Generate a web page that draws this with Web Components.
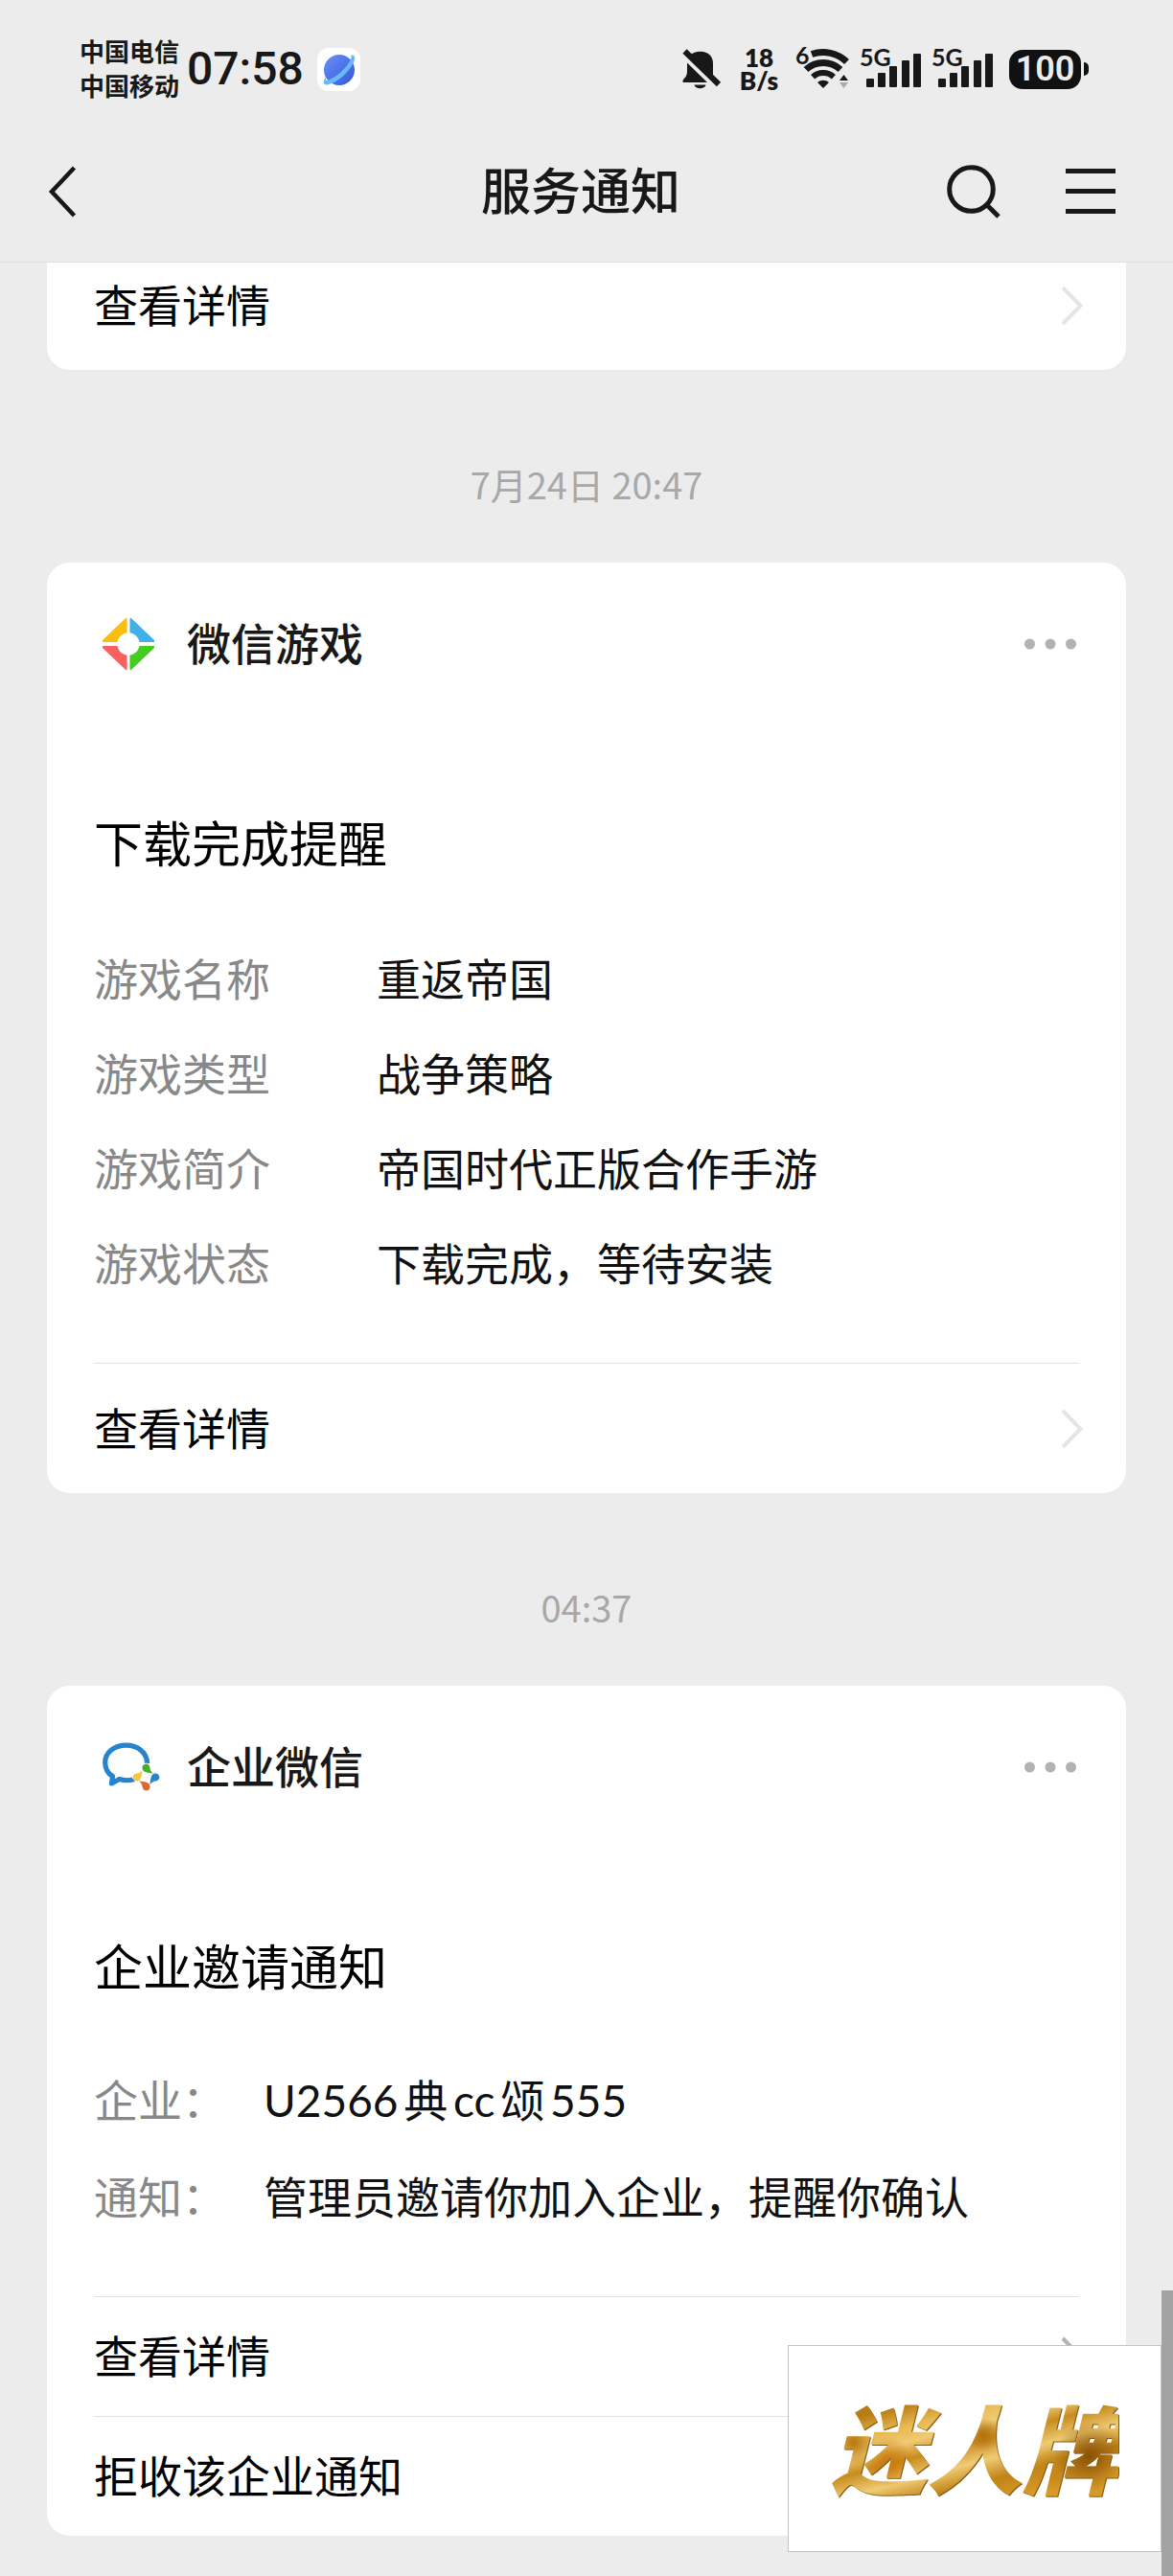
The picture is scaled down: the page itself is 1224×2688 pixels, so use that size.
<!DOCTYPE html>
<html lang="zh-CN">
<head>
<meta charset="utf-8">
<meta name="viewport" content="width=device-width, initial-scale=1">
<title>服务通知</title>
<style>
  body {
    margin: 0;
    min-height: 100vh;
    position: relative;
    background: #ececec;
    color: #000;
    font-family: "Noto Sans CJK SC", sans-serif;
    font-size: 46px;
  }

  main {
    padding: 0 49px 42px;
  }
</style>
</head>
<body>
  <status-bar time="07:58"></status-bar>
  <nav-header>服务通知</nav-header>

  <main>
    <notice-card cut>
      <card-action slot="actions" cut>查看详情</card-action>
    </notice-card>

    <time-stamp>7月24日 20:47</time-stamp>

    <notice-card source="微信游戏" heading="下载完成提醒">
      <svg slot="logo" width="72" height="72" viewBox="-9 -9 73 73" aria-hidden="true">
        <g stroke-width="2" stroke-linejoin="round">
          <path d="M25 1V24.500H1V24Z" fill="#fdbd10" stroke="#fdbd10"/>
          <path d="M30 1V24.500H54V24Z" fill="#40b1e8" stroke="#40b1e8"/>
          <path d="M30 54V30.500H54V31Z" fill="#44cc20" stroke="#44cc20"/>
          <path d="M25 54V30.500H1V31Z" fill="#f96161" stroke="#f96161"/>
        </g>
        <circle cx="27.500" cy="27.500" r="11.800" fill="#fff"/>
      </svg>
      <notice-field label="游戏名称">重返帝国</notice-field>
      <notice-field label="游戏类型">战争策略</notice-field>
      <notice-field label="游戏简介">帝国时代正版合作手游</notice-field>
      <notice-field label="游戏状态">下载完成，等待安装</notice-field>
      <card-action slot="actions" single>查看详情</card-action>
    </notice-card>

    <time-stamp>04:37</time-stamp>

    <notice-card source="企业微信" heading="企业邀请通知" narrow>
      <svg slot="logo" width="72" height="72" viewBox="0 0 72 72" aria-hidden="true">
        <defs>
          <path id="drop" d="M50.500 37.500A4 4 0 1 1 58.400 36.500C58.600 39 60 41 62 42.500C57 42 51 41.500 50.500 37.500Z"/>
        </defs>
        <path d="M55.500 32C55.500 21 46 13.200 33.500 13.200C21 13.200 11.700 21 11.700 31C11.700 38 14.500 42.500 19.500 45.500L18.500 53L26.500 48.500C31 50 37 50 42 48.800" fill="none" stroke="#2484cf" stroke-width="5.200" stroke-linejoin="round"/>
        <path d="M54.500 32.500L68.500 46.500L54.500 60.500L40.500 46.500Z" fill="#fff" stroke="#fff" stroke-width="2" stroke-linejoin="round"/>
        <use href="#drop" fill="#43b02a"/>
        <use href="#drop" fill="#2484cf" transform="rotate(90 54.500 46.500)"/>
        <use href="#drop" fill="#e2662c" transform="rotate(180 54.500 46.500)"/>
        <use href="#drop" fill="#f2c83c" transform="rotate(270 54.500 46.500)"/>
      </svg>
      <notice-field label="企业：" latin>U2566典cc颂555</notice-field>
      <notice-field label="通知：">管理员邀请你加入企业，提醒你确认</notice-field>
      <card-action slot="actions" strong>查看详情</card-action>
      <card-action slot="actions" strong>拒收该企业通知</card-action>
    </notice-card>
  </main>

  <corner-mark>迷人牌</corner-mark>

<script>
class StatusBar extends HTMLElement {
  constructor() {
    super();
    this.attachShadow({ mode: 'open' });
  }

  connectedCallback() {
    this.render();
  }

  signal() {
    return `
      <svg width="64" height="46" viewBox="0 0 64 46" role="img" aria-label="5G">
        <text x="-1" y="20" font-size="25">5G</text>
        <rect x="6" y="33" width="8" height="9" rx="1"/>
        <rect x="18" y="27" width="8" height="15" rx="1"/>
        <rect x="30" y="20" width="8" height="22" rx="1"/>
        <rect x="43" y="14" width="8" height="28" rx="1"/>
        <rect x="55" y="7" width="8" height="35" rx="1"/>
      </svg>
    `;
  }

  render() {
    const style = `
      :host {
        display: flex;
        align-items: center;
        justify-content: space-between;
        height: 144px;
        padding: 0 88px 0 83px;
        box-sizing: border-box;
        color: #181818;
      }

      .left, .right {
        display: flex;
        align-items: center;
      }

      .carriers {
        font-size: 26px;
        font-weight: 700;
        line-height: 36px;
        margin-right: 8px;
        padding-bottom: 2px;
      }

      .time {
        font-family: Roboto, sans-serif;
        font-size: 48px;
        font-weight: 500;
        line-height: 56px;
        margin-right: 14px;
      }

      .right {
        gap: 11px;
      }

      .speed {
        width: 44px;
        margin: 0 6px;
        font-family: Lato, sans-serif;
        font-size: 26px;
        font-weight: 800;
        line-height: 24px;
        text-align: center;
      }

      .battery {
        display: flex;
        align-items: center;
        gap: 3px;
        margin-left: 5px;
      }

      .level {
        width: 75px;
        border-radius: 14px;
        background: #111;
        color: #ececec;
        font-family: Roboto, sans-serif;
        font-size: 36px;
        font-weight: 600;
        line-height: 41px;
        text-align: center;
      }

      .tip {
        width: 5px;
        height: 14px;
        border-radius: 0 5px 5px 0;
        background: #111;
      }

      svg {
        display: block;
        fill: #181818;
        overflow: visible;
        font-family: Lato, sans-serif;
        font-weight: 700;
      }
    `;

    this.shadowRoot.innerHTML = `
      <style>${style}</style>
      <div class="left">
        <div class="carriers">
          <div>中国电信</div>
          <div>中国移动</div>
        </div>
        <div class="time">${this.getAttribute('time')}</div>
        <svg width="45" height="45" viewBox="0 0 45 45" aria-hidden="true">
          <defs>
            <linearGradient id="planet" x1="0" y1="0" x2="1" y2="1">
              <stop offset="0" stop-color="#6a8ff8"/>
              <stop offset="1" stop-color="#3458d8"/>
            </linearGradient>
          </defs>
          <rect width="45" height="45" rx="12" fill="#fff"/>
          <circle cx="23" cy="23" r="16" fill="url(#planet)"/>
          <path d="M34 8C38 6 41 9 38 15C34 24 22 36 12 38C7 40 5 36 9 30C8 34 10 35 13 33C22 29 31 20 35 12C36 9 36 8 34 8Z" fill="#68b8fa"/>
        </svg>
      </div>
      <div class="right">
        <svg width="41" height="42" viewBox="0 0 41 42" role="img" aria-label="静音">
          <path d="M8.500 6C11 4 14 2.700 19 2.700C27 2.700 32 8 32 15V28Z"/>
          <path d="M5 14.500L26 35H2C0 35 0 33 1.500 31.500C4 29 5 27 5 23Z"/>
          <path d="M12.500 37.500H24.500C23.500 42.500 13.500 42.500 12.500 37.500Z"/>
          <path d="M2.500 2.500L38 37" stroke="#181818" stroke-width="6"/>
        </svg>
        <div class="speed">18<br>B/s</div>
        <svg width="56" height="46" viewBox="0 0 56 46" role="img" aria-label="Wi-Fi 6">
          <text x="-1" y="18" font-size="25">6</text>
          <g fill="none" stroke="#181818">
            <path d="M16 7.500A36 36 0 0 1 52.500 15.500" stroke-width="7"/>
            <path d="M10 23.500A26.500 26.500 0 0 1 46 23.500" stroke-width="7"/>
            <path d="M17.100 31.300A16 16 0 0 1 38.900 31.300" stroke-width="6"/>
          </g>
          <path d="M28 43L22 37A9 9 0 0 1 34 37Z"/>
          <path d="M45 35L49.500 29L54 35Z"/>
          <path d="M45 37L49.500 43L54 37Z" fill="#aaa"/>
        </svg>
        ${this.signal()}
        ${this.signal()}
        <div class="battery">
          <div class="level">100</div>
          <div class="tip"></div>
        </div>
      </div>
    `;
  }
}

class NavHeader extends HTMLElement {
  constructor() {
    super();
    this.attachShadow({ mode: 'open' });
  }

  connectedCallback() {
    this.render();
  }

  render() {
    const style = `
      :host {
        display: grid;
        grid-template-columns: 1fr auto 1fr;
        align-items: center;
        height: 130px;
        padding: 0 60px 18px 48px;
        border-bottom: 1px solid #e0e0e0;
        box-sizing: border-box;
        color: #181818;
      }

      h1 {
        margin: 0;
        font-size: 52px;
        font-weight: 500;
        line-height: 72px;
        padding-bottom: 6px;
      }

      button {
        display: block;
        padding: 0;
        border: 0;
        background: none;
        color: inherit;
      }

      .tools {
        display: flex;
        align-items: center;
        justify-content: flex-end;
        gap: 68px;
      }

      svg {
        display: block;
        fill: none;
        stroke: currentColor;
        stroke-width: 5;
      }
    `;

    this.shadowRoot.innerHTML = `
      <style>${style}</style>
      <nav>
        <button type="button" aria-label="返回">
          <svg width="36" height="56" viewBox="0 0 36 56"><path d="M29.500 3L6 28L29.500 53" stroke-width="4.500"/></svg>
        </button>
      </nav>
      <h1><slot></slot></h1>
      <div class="tools">
        <button type="button" aria-label="搜索">
          <svg width="56" height="56" viewBox="0 0 56 56"><circle cx="25.500" cy="25.500" r="22.800"/><path d="M41.500 41.500L54 54"/></svg>
        </button>
        <button type="button" aria-label="菜单">
          <svg width="52" height="56" viewBox="0 0 52 56"><path d="M0 6.500H52M0 27.500H52M0 48.500H52"/></svg>
        </button>
      </div>
    `;
  }
}

class TimeStamp extends HTMLElement {
  constructor() {
    super();
    this.attachShadow({ mode: 'open' });
  }

  connectedCallback() {
    this.shadowRoot.innerHTML = `
      <style>
        :host {
          display: block;
          padding: 94px 0 57px;
          color: #a8a8a8;
          font-size: 38px;
          font-weight: 400;
          line-height: 50px;
          text-align: center;
        }
      </style>
      <slot></slot>
    `;
  }
}

class NoticeCard extends HTMLElement {
  constructor() {
    super();
    this.attachShadow({ mode: 'open' });
  }

  connectedCallback() {
    this.render();
  }

  render() {
    const style = `
      :host {
        display: block;
        padding: 0 49px;
        border-radius: 24px;
        background: #fff;
        --label-width: 295px;
      }

      :host([cut]) {
        border-radius: 0 0 24px 24px;
      }

      :host([narrow]) {
        --label-width: 177px;
      }

      header {
        display: flex;
        align-items: center;
        gap: 25px;
        padding-top: 49px;
        height: 72px;
      }

      .source {
        flex: 1;
        color: #181818;
        font-weight: 500;
        line-height: 66px;
        padding-bottom: 6px;
      }

      button {
        padding: 0;
        border: 0;
        background: none;
      }

      button svg {
        display: block;
        fill: #b2b2b2;
      }

      h2 {
        margin: 134px 0 72px;
        font-size: 51px;
        font-weight: 400;
        line-height: 72px;
      }

      .fields {
        display: flex;
        flex-direction: column;
        gap: 32px;
        padding-bottom: 72px;
      }
    `;

    const source = this.getAttribute('source');
    const body = source ? `
      <header>
        <slot name="logo"></slot>
        <div class="source">${source}</div>
        <button type="button" aria-label="更多">
          <svg width="60" height="40" viewBox="0 0 60 40">
            <circle cx="8.500" cy="20" r="5.500"/>
            <circle cx="30" cy="20" r="5.500"/>
            <circle cx="51.500" cy="20" r="5.500"/>
          </svg>
        </button>
      </header>
      <h2>${this.getAttribute('heading')}</h2>
      <div class="fields"><slot></slot></div>
    ` : '';

    this.shadowRoot.innerHTML = `
      <style>${style}</style>
      ${body}
      <slot name="actions"></slot>
    `;
  }
}

class NoticeField extends HTMLElement {
  constructor() {
    super();
    this.attachShadow({ mode: 'open' });
  }

  connectedCallback() {
    this.shadowRoot.innerHTML = `
      <style>
        :host {
          display: flex;
          line-height: 67px;
        }

        :host([latin]) {
          font-family: Lato, "Noto Sans CJK SC", sans-serif;
          text-autospace: normal;
        }

        .label {
          flex: 0 0 var(--label-width);
          color: #888;
        }

        .value {
          flex: 1;
          color: #111;
        }
      </style>
      <div class="label">${this.getAttribute('label')}</div>
      <div class="value"><slot></slot></div>
    `;
  }
}

class CardAction extends HTMLElement {
  constructor() {
    super();
    this.attachShadow({ mode: 'open' });
  }

  connectedCallback() {
    this.shadowRoot.innerHTML = `
      <style>
        :host {
          display: block;
          border-top: 1px solid #e3e3e3;
          --arrow: #e5e5e5;
        }

        :host([cut]) {
          border-top: 0;
        }

        :host([strong]) {
          --arrow: #b2b2b2;
        }

        a {
          display: flex;
          align-items: center;
          justify-content: space-between;
          height: 124px;
          color: #000;
          text-decoration: none;
        }

        :host([single]) a {
          height: 135px;
        }

        :host([cut]) a {
          height: 90px;
          padding-bottom: 22px;
        }

        span {
          line-height: 66px;
          padding-bottom: 6px;
        }

        svg {
          display: block;
          margin-right: -4px;
          fill: none;
          stroke: var(--arrow);
          stroke-width: 4;
        }
      </style>
      <a href="#">
        <span><slot></slot></span>
        <svg width="24" height="44" viewBox="0 0 24 44" aria-hidden="true"><path d="M3 3L21.500 22L3 41"/></svg>
      </a>
    `;
  }
}

class CornerMark extends HTMLElement {
  constructor() {
    super();
    this.attachShadow({ mode: 'open' });
  }

  connectedCallback() {
    this.shadowRoot.innerHTML = `
      <style>
        :host {
          position: absolute;
          right: 0;
          bottom: 0;
          display: flex;
          align-items: flex-end;
        }

        .plate {
          margin-bottom: 25px;
          padding: 33px 44px 39px;
          border: 1px solid #c4c4c4;
          background: #fff;
        }

        .name {
          display: block;
          font-size: 100px;
          font-style: italic;
          font-weight: 900;
          line-height: 142px;
          color: transparent;
          background:
            radial-gradient(circle at 20% 62%, #c8780a 0, transparent 10%),
            radial-gradient(circle at 8% 48%, #b87810 0, transparent 8%),
            radial-gradient(circle at 53% 42%, #b0700a 0, transparent 10%),
            radial-gradient(circle at 66% 62%, #b87408 0, transparent 8%),
            radial-gradient(circle at 90% 58%, #8a5205 0, transparent 13%),
            radial-gradient(circle at 78% 68%, #c4861a 0, transparent 9%),
            linear-gradient(165deg, #b87c14 22%, #e6b850 32%, #efcb74 40%, #c88c20 48%, #efcb74 58%, #c08418 68%, #d89a28 80%);
          -webkit-background-clip: text;
          background-clip: text;
          filter: drop-shadow(1px 1px 0 #8a5a14);
        }

        .strip {
          width: 12px;
          height: 298px;
          background: #a3a3a3;
        }
      </style>
      <div class="plate"><span class="name"><slot></slot></span></div>
      <div class="strip"></div>
    `;
  }
}

customElements.define('status-bar', StatusBar);
customElements.define('nav-header', NavHeader);
customElements.define('time-stamp', TimeStamp);
customElements.define('notice-card', NoticeCard);
customElements.define('notice-field', NoticeField);
customElements.define('card-action', CardAction);
customElements.define('corner-mark', CornerMark);
</script>
</body>
</html>
